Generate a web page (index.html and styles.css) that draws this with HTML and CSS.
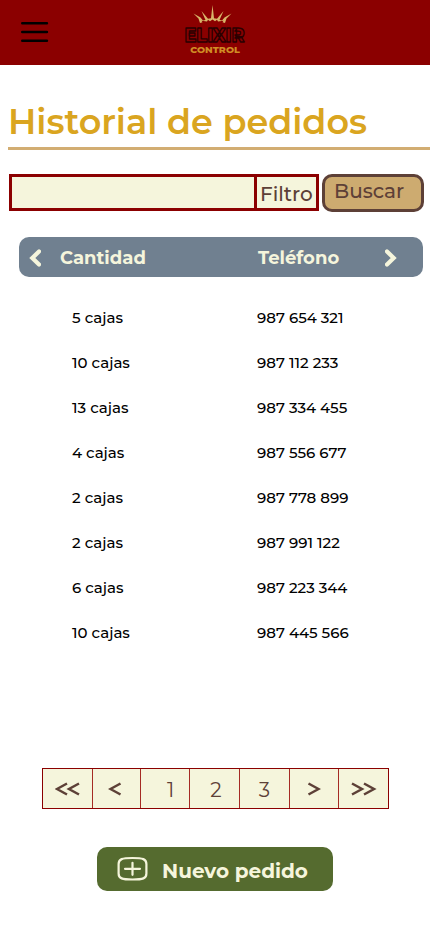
FILE: index.html
```html
<!DOCTYPE html>
<html lang="es">
<head>
<meta charset="utf-8">
<meta name="viewport" content="width=device-width, initial-scale=1">
<title>Historial de pedidos</title>
<link rel="stylesheet" href="styles.css">
</head>
<body>
<header class="topbar">
  <svg class="menu" viewBox="0 0 28 22" aria-hidden="true"><path d="M1.3 2.3h24.6M1.3 11h24.6M1.3 19.7h24.6"/></svg>
  <svg class="logo" viewBox="0 0 72 54" aria-hidden="true">
    <path class="crown" d="M20 19L18.500 14.500L13.500 9.500L20.500 13.500L23 16.500L25.500 16L21.500 7L28 14.800L31 14.300L31.700 8L32.500 1L33.300 8L34 14.300L37 14.800L43.500 7L39.500 16L42 16.500L44.500 13.500L51.500 9.500L46.500 14.500L45 19L42.500 18.300L43.500 16.800L38 17.500L37 15.800L35 17.200L32.500 15.500L30 17.200L28 15.800L27 17.500L21.500 16.800L22.500 18.300Z"/>
    <text class="brand" x="4.500" y="38" textLength="60" lengthAdjust="spacingAndGlyphs">ELIXIR</text>
    <text class="brand-sub" x="10.300" y="48.600" textLength="49.500" lengthAdjust="spacingAndGlyphs">CONTROL</text>
  </svg>
</header>
<main>
  <h1 class="title">Historial de pedidos</h1>
  <form class="search">
    <div class="field"></div>
    <div class="filter">Filtro</div>
    <div class="submit">Buscar</div>
  </form>
  <div class="head">
    <svg class="arrow" viewBox="0 0 12 18"><path d="M10 2.500L3.300 9l6.700 6.500"/></svg>
    <span class="head-qty">Cantidad</span>
    <span class="head-tel">Teléfono</span>
    <svg class="arrow" viewBox="0 0 12 18"><path d="M2 2.500L8.700 9l-6.700 6.500"/></svg>
  </div>
  <div class="rows">
    <div class="row"><span>5 cajas</span><span>987 654 321</span></div>
    <div class="row"><span>10 cajas</span><span>987 112 233</span></div>
    <div class="row"><span>13 cajas</span><span>987 334 455</span></div>
    <div class="row"><span>4 cajas</span><span>987 556 677</span></div>
    <div class="row"><span>2 cajas</span><span>987 778 899</span></div>
    <div class="row"><span>2 cajas</span><span>987 991 122</span></div>
    <div class="row"><span>6 cajas</span><span>987 223 344</span></div>
    <div class="row"><span>10 cajas</span><span>987 445 566</span></div>
  </div>
  <nav class="pages">
    <div><svg class="chev" viewBox="0 0 26 14"><path d="M12 1.500L2 7l10 5.500M24 1.500L14 7l10 5.500"/></svg></div>
    <div><svg class="chev chev-one" viewBox="0 0 14 14"><path d="M12.500 1.500L2.500 7l10 5.500"/></svg></div>
    <div class="num num-1">1</div>
    <div class="num num-2">2</div>
    <div class="num">3</div>
    <div><svg class="chev chev-one" viewBox="0 0 14 14"><path d="M1.500 1.500L11.500 7L1.500 12.500"/></svg></div>
    <div><svg class="chev" viewBox="0 0 26 14"><path d="M1 1.500L11 7L1 12.500M13 1.500L23 7l-10 5.500"/></svg></div>
  </nav>
  <div class="new">
    <svg class="plus" viewBox="0 0 32 26"><path d="M15.500 2C26 2 29.400 3 29.400 8V17.500C29.400 22.500 26 23.500 15.500 23.500S1.600 22.500 1.600 17.500V8C1.600 3 5 2 15.500 2Z"/><path d="M15.500 6.800v12M8 12.800h15"/></svg>
    <span>Nuevo pedido</span>
  </div>
</main>
</body>
</html>
```
FILE: styles.css
```css
* { box-sizing: border-box; }
body { margin: 0; width: 430px; height: 932px; overflow: hidden; background: #fff; font-family: Montserrat, Inter, "Open Sans", sans-serif; }
svg { display: block; flex: none; }
span { white-space: nowrap; }
.topbar { height: 65px; background: #8b0000; display: flex; align-items: flex-start; }
.menu { width: 28px; height: 22px; margin: 21px 0 0 21px; fill: none; stroke: #000; stroke-width: 2.6; stroke-linecap: round; }
.logo { width: 72px; height: 54px; margin: 4px 0 0 131px; }
.crown { fill: #d8b66a; }
.brand { font: 800 20px Montserrat, Inter, sans-serif; fill: #850000; stroke: #2a0000; stroke-width: 1.4; stroke-linejoin: round; }
.brand-sub { font: 800 9.5px Montserrat, Inter, sans-serif; fill: #d08c25; }
.title { margin: 36px 0 0 8px; height: 49px; border-bottom: 3px solid #d2ad72; color: #daa520; font-size: 35px; line-height: 42px; font-weight: 600; white-space: nowrap; }
.search { display: flex; margin: 24px 0 0 9px; }
.field { width: 248px; height: 37px; background: #f5f5dc; border: 3px solid #8b0000; }
.filter { width: 65px; height: 37px; margin-left: -3px; padding: 4px 0 0 3px; background: #f5f5dc; border: 3px solid #8b0000; color: #5d4037; font-size: 20px; line-height: 26px; font-weight: 500; }
.submit { width: 102px; height: 38px; margin-left: 3px; padding: 1px 0 0 9px; background: #cdab70; border: 3px solid #5d4037; border-radius: 10px; color: #5d4037; font-size: 20px; line-height: 26px; font-weight: 500; }
.head { display: flex; align-items: center; width: 404px; height: 40px; margin: 25px 0 0 19px; padding: 2px 0 0 10px; background: #708090; border-radius: 10px; color: #f5f5dc; font-size: 18px; font-weight: 700; }
.arrow { width: 12px; height: 18px; fill: none; stroke: #f5f5dc; stroke-width: 4.2; stroke-linecap: round; stroke-linejoin: miter; }
.head-qty { width: 198px; margin-left: 19px; }
.head-tel { width: 127px; }
.rows { padding: 18px 0 0 72px; color: #000; font-size: 15px; font-weight: 500; }
.row { display: grid; grid-template-columns: 185px 150px; align-items: center; height: 45px; }
.pages { display: grid; grid-template-columns: 50px 48px 49px 50px 50px 49px 49px; width: 347px; height: 41px; margin: 113px 0 0 42px; background: #f5f5dc; border: 1px solid #8b0000; color: #5d4037; font-size: 20px; }
.pages > div { display: flex; align-items: center; justify-content: center; border-right: 1px solid #a52b24; padding-top: 1px; }
.pages > div:last-child { border-right: 0; }
.chev { width: 26px; height: 14px; fill: none; stroke: #5d4037; stroke-width: 2.5; }
.chev-one { width: 14px; }
.pages > div:nth-child(2) { padding-right: 3px; }
.pages .num { padding-top: 3px; }
.pages .num-1 { padding-left: 11px; }
.pages .num-2 { padding-left: 3px; }
.new { display: flex; align-items: center; width: 236px; height: 44px; margin: 38px 0 0 97px; padding-left: 20px; background: #556b2f; border-radius: 10px; color: #f5f5dc; font-size: 20px; font-weight: 700; }
.plus { width: 32px; height: 26px; fill: none; stroke: #f5f5dc; stroke-width: 2.2; stroke-linecap: round; }
.new span { margin: 4px 0 0 13px; }
```
